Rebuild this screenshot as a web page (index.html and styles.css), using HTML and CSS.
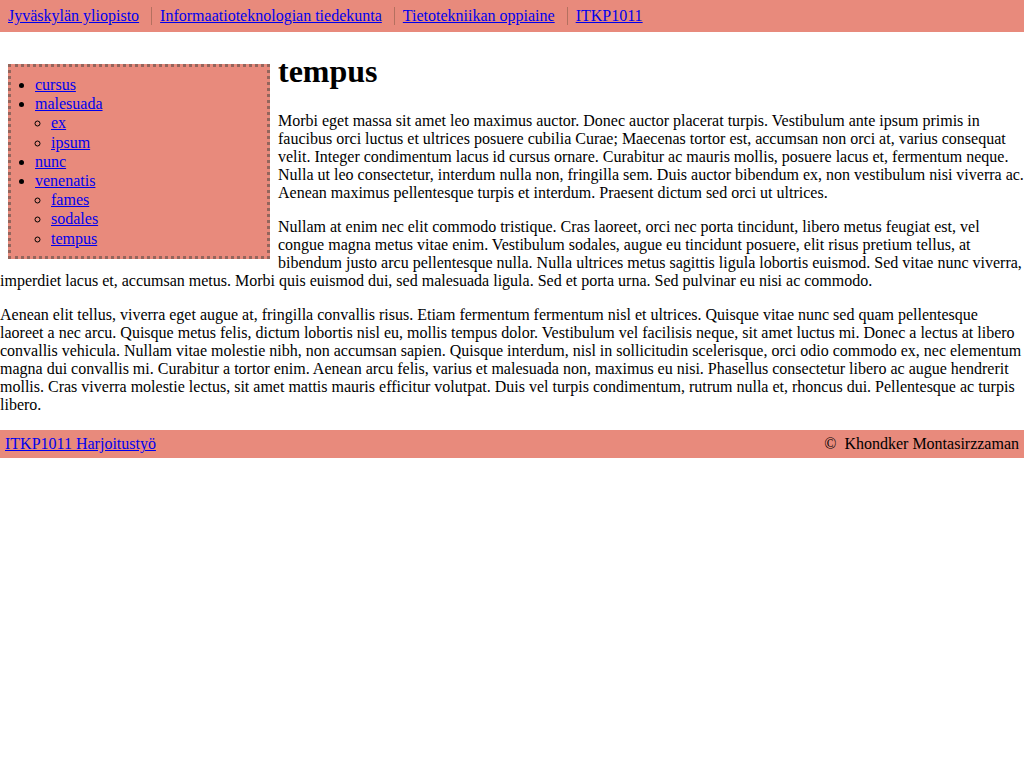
FILE: index.html
```html
<!DOCTYPE html>
<html lang="fi">
<head>
<meta charset="utf-8">
<title>tempus</title>
<link rel="stylesheet" href="styles.css">
</head>
<body>
<header class="topbar">
  <nav class="crumbs">
    <a class="crumb" href="#">Jyväskylän yliopisto</a>
    <a class="crumb" href="#">Informaatioteknologian tiedekunta</a>
    <a class="crumb" href="#">Tietotekniikan oppiaine</a>
    <a class="crumb" href="#">ITKP1011</a>
  </nav>
</header>
<main class="main">
  <aside class="sidebar">
    <ul class="menu">
      <li><a href="#">cursus</a></li>
      <li><a href="#">malesuada</a>
        <ul class="submenu">
          <li><a href="#">ex</a></li>
          <li><a href="#">ipsum</a></li>
        </ul>
      </li>
      <li><a href="#">nunc</a></li>
      <li><a href="#">venenatis</a>
        <ul class="submenu">
          <li><a href="#">fames</a></li>
          <li><a href="#">sodales</a></li>
          <li><a href="#">tempus</a></li>
        </ul>
      </li>
    </ul>
  </aside>
  <h1 class="title">tempus</h1>
  <p class="para">Morbi eget massa sit amet leo maximus auctor. Donec auctor placerat turpis. Vestibulum ante ipsum primis in faucibus orci luctus et ultrices posuere cubilia Curae; Maecenas tortor est, accumsan non orci at, varius consequat velit. Integer condimentum lacus id cursus ornare. Curabitur ac mauris mollis, posuere lacus et, fermentum neque. Nulla ut leo consectetur, interdum nulla non, fringilla sem. Duis auctor bibendum ex, non vestibulum nisi viverra ac. Aenean maximus pellentesque turpis et interdum. Praesent dictum sed orci ut ultrices.</p>
  <p class="para">Nullam at enim nec elit commodo tristique. Cras laoreet, orci nec porta tincidunt, libero metus feugiat est, vel congue magna metus vitae enim. Vestibulum sodales, augue eu tincidunt posuere, elit risus pretium tellus, at bibendum justo arcu pellentesque nulla. Nulla ultrices metus sagittis ligula lobortis euismod. Sed vitae nunc viverra, imperdiet lacus et, accumsan metus. Morbi quis euismod dui, sed malesuada ligula. Sed et porta urna. Sed pulvinar eu nisi ac commodo.</p>
  <p class="para">Aenean elit tellus, viverra eget augue at, fringilla convallis risus. Etiam fermentum fermentum nisl et ultrices. Quisque vitae nunc sed quam pellentesque laoreet a nec arcu. Quisque metus felis, dictum lobortis nisl eu, mollis tempus dolor. Vestibulum vel facilisis neque, sit amet luctus mi. Donec a lectus at libero convallis vehicula. Nullam vitae molestie nibh, non accumsan sapien. Quisque interdum, nisl in sollicitudin scelerisque, orci odio commodo ex, nec elementum magna dui convallis mi. Curabitur a tortor enim. Aenean arcu felis, varius et malesuada non, maximus eu nisi. Phasellus consectetur libero ac augue hendrerit mollis. Cras viverra molestie lectus, sit amet mattis mauris efficitur volutpat. Duis vel turpis condimentum, rutrum nulla et, rhoncus dui. Pellentesque ac turpis libero.</p>
</main>
<footer class="footer">
  <a href="#">ITKP1011 Harjoitustyö</a>
  <span class="copy">©&nbsp; Khondker Montasirzzaman</span>
</footer>
</body>
</html>
```

FILE: styles.css
```css
html, body {
  margin: 0;
  padding: 0;
  background: #ffffff;
}

body {
  font-family: "Liberation Serif", "Times New Roman", serif;
  font-size: 16px;
  line-height: 18px;
  color: #000;
}

a {
  color: #0000ee;
}

.topbar {
  background: #e88a7c;
  height: 32px;
  display: flex;
  align-items: center;
}

.crumbs {
  display: flex;
  align-items: center;
}

.crumb {
  padding: 0 12px 0 8px;
  line-height: 18px;
}

.crumb + .crumb {
  border-left: 1px solid #b4705f;
}

.main {
  display: flow-root;
}

.sidebar {
  float: left;
  width: 240px;
  margin: 32px 8px 8px 8px;
  padding: 8px;
  background: #e88a7c;
  border: 3px dotted #93655c;
}

.menu {
  margin: 0;
  padding-left: 16px;
  list-style: disc;
}

.menu li {
  line-height: 19.2px;
}

.submenu {
  margin: 0;
  padding-left: 16px;
  list-style: circle;
}

.title {
  font-size: 32px;
  line-height: 37px;
  font-weight: bold;
  margin: 21.44px 0;
}

.para {
  margin: 16px 0;
}

.footer {
  background: #e88a7c;
  height: 28px;
  padding: 0 5px;
  display: flex;
  align-items: center;
  justify-content: space-between;
}
```
